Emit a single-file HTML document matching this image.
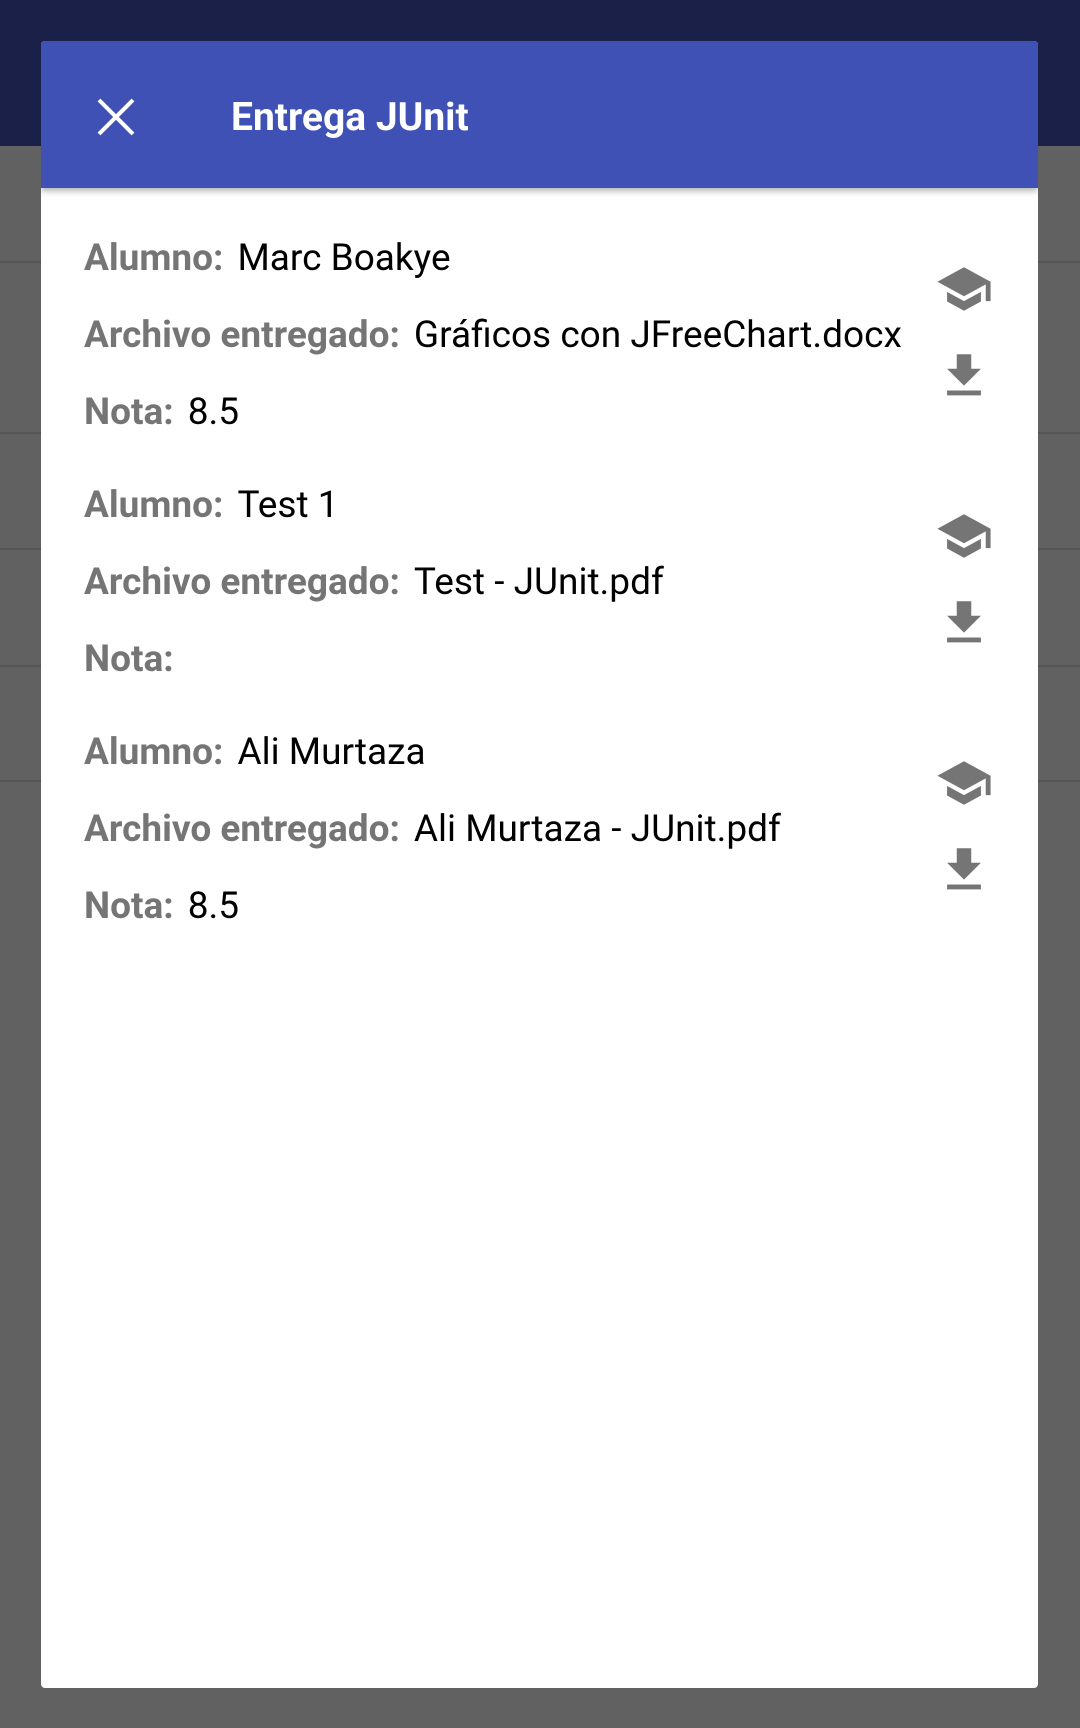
<!DOCTYPE html>
<html><head><meta charset="utf-8"><style>
body{margin:0;width:1080px;height:1728px;background:#616161;position:relative;overflow:hidden;font-family:"Roboto","Liberation Sans",sans-serif}
.top{position:absolute;left:0;top:0;width:1080px;height:146px;background:#1a2048}
.ln{position:absolute;left:0;width:1080px;height:2px;background:#555}
.dlg{position:absolute;left:41px;top:41px;width:997px;height:1647px;background:#fff;border-radius:4px;overflow:hidden}
.hdr{position:absolute;left:0;top:0;width:997px;height:147px;background:#3f51b5;box-shadow:0 3px 6px rgba(0,0,0,.3)}
.ttl{position:absolute;left:190px;top:53px;color:#fff;font-weight:bold;font-size:39px}
.t{position:absolute;left:43px;font-size:37px;color:#000;white-space:nowrap}
.t b{color:#757575;margin-right:14px}
svg.i{position:absolute;width:58px;height:58px}
</style></head><body>
<div class="top"></div>
<div class="ln" style="top:261px"></div><div class="ln" style="top:432px"></div><div class="ln" style="top:548px"></div><div class="ln" style="top:665px"></div><div class="ln" style="top:780px"></div>
<div class="dlg">
<div class="hdr">
<svg style="position:absolute;left:54px;top:55px" width="42" height="42" viewBox="0 0 42 42"><path d="M4 4L38 38M38 4L4 38" stroke="#fff" stroke-width="4"/></svg>
<div class="ttl">Entrega JUnit</div>
</div>
<div class="t" style="top:196px"><b>Alumno:</b>Marc Boakye</div>
<div class="t" style="top:273px"><b>Archivo entregado:</b>Gráficos con JFreeChart.docx</div>
<div class="t" style="top:350px"><b>Nota:</b>8.5</div>
<div class="t" style="top:443px"><b>Alumno:</b>Test 1</div>
<div class="t" style="top:520px"><b>Archivo entregado:</b>Test - JUnit.pdf</div>
<div class="t" style="top:597px"><b>Nota:</b></div>
<div class="t" style="top:690px"><b>Alumno:</b>Ali Murtaza</div>
<div class="t" style="top:767px"><b>Archivo entregado:</b>Ali Murtaza - JUnit.pdf</div>
<div class="t" style="top:844px"><b>Nota:</b>8.5</div>
<svg class="i" style="left:894px;top:219px" viewBox="0 0 24 24"><path fill="#757575" d="M5 13.18v4L12 21l7-3.82v-4L12 17l-7-3.82zM12 3L1 9l11 6 9-4.91V17h2V9L12 3z"/></svg>
<svg class="i" style="left:894px;top:306px" viewBox="0 0 24 24"><path fill="#757575" d="M19 9h-4V3H9v6H5l7 7 7-7zM5 18v2h14v-2H5z"/></svg>
<svg class="i" style="left:894px;top:466px" viewBox="0 0 24 24"><path fill="#757575" d="M5 13.18v4L12 21l7-3.82v-4L12 17l-7-3.82zM12 3L1 9l11 6 9-4.91V17h2V9L12 3z"/></svg>
<svg class="i" style="left:894px;top:553px" viewBox="0 0 24 24"><path fill="#757575" d="M19 9h-4V3H9v6H5l7 7 7-7zM5 18v2h14v-2H5z"/></svg>
<svg class="i" style="left:894px;top:713px" viewBox="0 0 24 24"><path fill="#757575" d="M5 13.18v4L12 21l7-3.82v-4L12 17l-7-3.82zM12 3L1 9l11 6 9-4.91V17h2V9L12 3z"/></svg>
<svg class="i" style="left:894px;top:800px" viewBox="0 0 24 24"><path fill="#757575" d="M19 9h-4V3H9v6H5l7 7 7-7zM5 18v2h14v-2H5z"/></svg>
</div>
</body></html>
